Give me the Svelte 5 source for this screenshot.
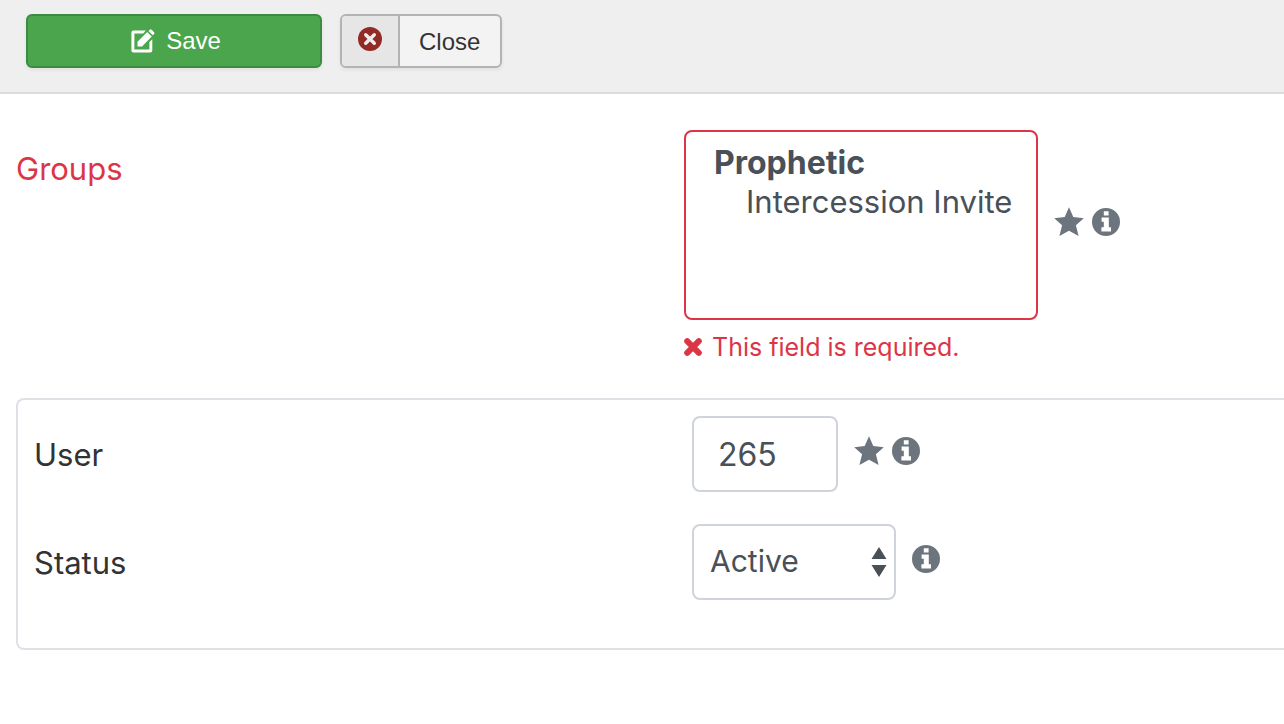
<script>
  let groups = [];
  let user = "265";
  let status = "1";
</script>

{#snippet star()}
  <svg class="hint star" viewBox="0 0 30 30" role="img" aria-label="Required">
    <path d="M15 0.3 L19.3 10.1 L29.8 11.2 L21.9 18.2 L24.6 29 L15 23.7 L5.4 29 L8.1 18.2 L0.2 11.2 L10.7 10.1 Z" />
  </svg>
{/snippet}

{#snippet info()}
  <svg class="hint info" viewBox="0 0 28 28" role="img" aria-label="Information">
    <path
      fill-rule="evenodd"
      d="M14 0a14 14 0 1 0 0 28a14 14 0 1 0 0-28ZM11.8 3.2h4.8v4.2h-4.8ZM9.6 9.4h7.2v9.8h2.2v4.4H9.4v-4.4h2.4v-5.4h-2.2Z"
    />
  </svg>
{/snippet}

<header class="toolbar">
  <button class="btn save" type="submit" form="member-form">
    <svg class="edit" viewBox="0 0 24 24" aria-hidden="true">
      <path d="M14.8 1.5 L12.2 4.5 H3.4 V20.4 H18.4 V13 L21.3 10.2 V21.5 Q21.3 23.6 19.2 23.6 H2.4 Q0.4 23.6 0.4 21.5 V3.5 Q0.4 1.5 2.4 1.5 Z" />
      <path d="M6.5 12.8 L16.2 3 L20.8 7.6 L11 17.4 H6.5 Z" />
      <path d="M17.5 2.1 L18.8 0.7 Q19.7 -0.2 20.6 0.7 L23.1 3.2 Q24 4.1 23.1 5 L21.7 6.3 Z" />
    </svg>
    Save
  </button>
  <button class="btn close" type="button">
    <span class="close-icon">
      <svg viewBox="0 0 24 24" aria-hidden="true">
        <circle cx="12" cy="12" r="12" fill="#942a25" />
        <path d="M7.7 7.7 L16.3 16.3 M16.3 7.7 L7.7 16.3" stroke="#eee" stroke-width="3.4" stroke-linecap="round" />
      </svg>
    </span>
    <span class="close-text">Close</span>
  </button>
</header>

<form id="member-form" on:submit|preventDefault>
  <div class="row groups">
    <label class="invalid" for="groups">Groups</label>
    <div>
      <div class="control">
        <select id="groups" class="list" multiple size="4" aria-describedby="groups-error" bind:value={groups}>
          <optgroup label="Prophetic">
            <option value="1">Intercession Invite</option>
          </optgroup>
        </select>
        {@render star()}
        {@render info()}
      </div>
      <p id="groups-error" class="error">
        <svg viewBox="0 0 18 18" aria-hidden="true">
          <path d="M3.2 3.2 L14.8 14.8 M14.8 3.2 L3.2 14.8" stroke="currentColor" stroke-width="6" stroke-linecap="round" />
        </svg>
        This field is required.
      </p>
    </div>
  </div>

  <div class="panel">
    <div class="row">
      <label for="user">User</label>
      <div class="control">
        <input id="user" type="text" bind:value={user} />
        {@render star()}
        {@render info()}
      </div>
    </div>
    <div class="row">
      <label for="status">Status</label>
      <div class="control">
        <select id="status" class="dropdown" bind:value={status}>
          <option value="1">Active</option>
          <option value="0">Inactive</option>
        </select>
        {@render info()}
      </div>
    </div>
  </div>
</form>

<style>
  :global(body) {
    margin: 0;
    background: #fff;
    color: #333;
    font-family: Inter, "Open Sans", sans-serif;
    font-size: 31px;
    line-height: 48px;
  }

  .toolbar {
    display: flex;
    gap: 18px;
    padding: 14px 26px 24px;
    background: #efefef;
    border-bottom: 2px solid #dcdcdc;
  }

  .btn {
    display: flex;
    align-items: center;
    box-sizing: border-box;
    height: 54px;
    padding: 0;
    border: 2px solid #b3b3b3;
    border-radius: 6px;
    box-shadow: 0 2px 4px rgba(0, 0, 0, 0.06);
    font-family: "Liberation Sans", Arial, sans-serif;
    font-size: 24px;
    line-height: 52px;
    cursor: pointer;
  }

  .save {
    justify-content: center;
    gap: 11px;
    width: 296px;
    padding-left: 4px;
    border-color: #3d8b40;
    background: #4aa54c;
    color: #fff;
  }

  .edit {
    width: 24px;
    height: 24px;
    fill: currentColor;
    overflow: visible;
  }

  .close {
    overflow: hidden;
    background: #f3f3f3;
    color: #333;
  }

  .close-icon {
    display: flex;
    justify-content: center;
    box-sizing: border-box;
    width: 58px;
    height: 50px;
    padding-top: 11px;
    border-right: 2px solid #b3b3b3;
    background: #e6e6e6;
  }

  .close-icon svg {
    width: 24px;
    height: 24px;
  }

  .close-text {
    padding: 2px 20px 0 19px;
  }

  .row {
    display: grid;
    grid-template-columns: calc(50% + 33px) 1fr;
  }

  .row label {
    padding-top: 15px;
  }

  .groups {
    grid-template-columns: calc(50% + 34px) 1fr;
    padding: 36px 0 32px 16px;
  }

  .row .invalid {
    color: #dc3545;
  }

  .control {
    display: flex;
    align-items: center;
  }

  select,
  input {
    box-sizing: border-box;
    margin: 0 16px 0 0;
    border: 2px solid #ced4da;
    border-radius: 8px;
    background: #fff;
    color: #495057;
    font: inherit;
    outline: none;
  }

  .list {
    width: 354px;
    height: 190px;
    padding: 11px 16px 11px 26px;
    border-color: #dc3545;
    overflow: hidden;
  }

  .list option {
    padding: 0 0 0 34px;
    font-size: 31px;
    line-height: 40px;
  }

  .list optgroup {
    font-size: 32px;
    line-height: 40px;
  }

  input {
    width: 146px;
    height: 76px;
    padding: 0 24px;
    font-size: 32px;
  }

  .dropdown {
    width: 204px;
    height: 76px;
    padding: 0 40px 2px 16px;
    appearance: none;
    background: #fff
      url("data:image/svg+xml,%3Csvg xmlns='http://www.w3.org/2000/svg' viewBox='0 0 16 30'%3E%3Cpath fill='%23495057' d='M8 0L0.5 12h15zM8 30L0.5 18h15z'/%3E%3C/svg%3E")
      no-repeat right 7px center / 16px 30px;
    font-size: 30px;
  }

  .hint {
    flex: none;
    margin-bottom: 7px;
    fill: #6c757d;
  }

  .star {
    width: 30px;
    height: 30px;
    margin-right: 8px;
  }

  .info {
    width: 28px;
    height: 28px;
  }

  .error {
    display: flex;
    align-items: center;
    gap: 10px;
    margin: 8px 0 0;
    color: #dc3545;
    font-size: 25px;
    line-height: 38px;
  }

  .error svg {
    width: 18px;
    height: 18px;
  }

  .panel {
    display: grid;
    gap: 32px;
    margin-left: 16px;
    padding: 16px 0 48px 16px;
    border: 2px solid #dee2e6;
    border-right: 0;
    border-radius: 8px 0 0 8px;
  }
</style>
